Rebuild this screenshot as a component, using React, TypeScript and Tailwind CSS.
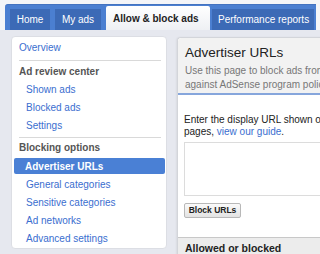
import React from "react";

const tabs = [
  { label: "Home", w: "w-[40px]", ml: "ml-[5px]" },
  { label: "My ads", w: "w-[46px]", ml: "ml-[5px]" },
];

const SideLink = ({ label, indent }: { label: string; indent?: boolean }) => (
  <div
    className={`h-[18px] flex items-center text-[10px] text-[#3a6ecf] ${
      indent ? "pl-[14px]" : "pl-[7px]"
    }`}
  >
    {label}
  </div>
);

const SideHeading = ({ label }: { label: string }) => (
  <div className="h-[18px] flex items-center pl-[7px] text-[10px] font-bold text-[#555]">
    {label}
  </div>
);

const Divider = ({ className }: { className: string }) => (
  <div className={`h-px bg-[#d9d9d9] ml-[7px] mr-[5px] ${className}`}></div>
);

export default function App() {
  return (
    <div className="w-[320px] h-[254px] overflow-hidden bg-[#e6e8ef] font-['Liberation_Sans',Arial,sans-serif]">
      {/* top nav */}
      <div className="pt-[4px] pl-[5px] bg-[#f4f5f8]">
        <div className="h-[26px] w-[311px] bg-[#4b7fd1] rounded-tl-[3px] flex items-end border-t border-[#4473c0]">
          {tabs.map((t) => (
            <div
              key={t.label}
              className={`${t.w} ${t.ml} h-[21px] bg-[#3c6ab6] text-white text-[10px] flex items-center justify-center`}
            >
              {t.label}
            </div>
          ))}
          <div className="w-[104px] ml-[5px] h-[24px] bg-gradient-to-b from-white to-[#eef0f4] rounded-t-[2px] text-[#222] text-[10px] font-bold flex items-center pl-[7px]">
            Allow &amp; block ads
          </div>
          <div className="w-[102px] ml-[2px] h-[21px] bg-[#3c6ab6] text-white text-[10px] flex items-center pl-[6px]">
            Performance reports
          </div>
        </div>
      </div>

      <div className="flex pl-[11px] pt-[6px] gap-[10px] items-start">
        {/* sidebar */}
        <div className="w-[156px] h-[213px] shrink-0 bg-white rounded-[4px] border border-[#dcdee4] pt-[1px] pb-[2px]">
          <SideLink label="Overview" />
          <Divider className="mt-[4px]" />
          <div className="mt-[1px]">
            <SideHeading label="Ad review center" />
            <SideLink label="Shown ads" indent />
            <SideLink label="Blocked ads" indent />
            <SideLink label="Settings" indent />
          </div>
          <Divider className="mt-[3px]" />
          <SideHeading label="Blocking options" />
          <div className="mt-[2px] ml-[2px] mr-px h-[16px] rounded-[2px] bg-[#4a80d5] text-white text-[10px] font-bold flex items-center pl-[11px]">
            Advertiser URLs
          </div>
          <div className="mt-[1px]">
            <SideLink label="General categories" indent />
            <SideLink label="Sensitive categories" indent />
            <SideLink label="Ad networks" indent />
            <SideLink label="Advanced settings" indent />
          </div>
        </div>

        {/* main panel */}
        <div className="w-[200px] shrink-0 mt-px bg-white rounded-tl-[4px] border-l border-t border-[#d3d5da] shadow-[-1px_0_2px_rgba(0,0,0,0.06)]">
          <div className="bg-[#f2f2f2] pl-[7px] pt-[7px] pb-[1px] rounded-tl-[4px]">
            <div className="text-[13.5px] leading-[16px] text-[#222] whitespace-nowrap">
              Advertiser URLs
            </div>
            <div className="mt-[3px] text-[10px] leading-[14px] text-[#777] whitespace-nowrap">
              <div>Use this page to block ads from</div>
              <div>against AdSense program policies</div>
            </div>
          </div>
          <div className="h-[2px] bg-[#86a6dc]"></div>
          <div className="pl-[6px] pt-[19px]">
            <div className="text-[10px] leading-[12px] text-[#222] whitespace-nowrap">
              <div>Enter the display URL shown on</div>
              <div>
                pages, <span className="text-[#3a6ecf]">view our guide</span>.
              </div>
            </div>
            <div className="mt-[4px] h-[54px] w-[200px] border border-[#dcdcdc] bg-white"></div>
            <button className="mt-[7px] h-[15px] w-[57px] rounded-[2px] border border-[#b8b8b8] bg-gradient-to-b from-[#fafafa] to-[#e3e3e3] text-[8.5px] font-bold text-[#222] flex items-center justify-center">
              Block URLs
            </button>
          </div>
          <div className="mt-[19px] border-t border-[#c8c8c8] bg-[#ececec] pl-[7px] pt-[4px] h-[30px]">
            <div className="text-[10.5px] leading-[12px] font-bold text-[#222] whitespace-nowrap">
              Allowed or blocked
            </div>
          </div>
        </div>
      </div>
    </div>
  );
}
